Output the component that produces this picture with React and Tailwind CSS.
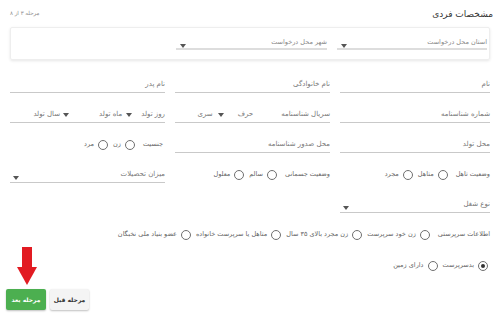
import React from "react";

// فلش کوچک منوی کشویی
const Caret = () => (
  <span className="inline-block w-0 h-0 border-x-[3px] border-x-transparent border-t-[4px] border-t-[#555]" />
);

const Radio = ({ checked = false }) => (
  <span className="w-[10px] h-[10px] rounded-full border border-[#6f6f6f] flex items-center justify-center shrink-0">
    {checked && <span className="w-[4px] h-[4px] rounded-full bg-[#333]" />}
  </span>
);

const Field = ({ label, select = false }) => (
  <div className="h-[30px] flex items-end border-b border-[#c9c9c9]">
    <div className="w-full flex items-center justify-between h-[14px] pb-[1px]">
      <span className="text-[7px] text-[#777]">{label}</span>
      {select && <span className="pl-[3px]"><Caret /></span>}
    </div>
  </div>
);

const RadioGroup = ({ label, options, checkedIndex = -1 }) => (
  <div className="flex items-center gap-[5px] text-[6.5px] text-[#666]">
    {label && <span className="ml-[3px]">{label}</span>}
    {options.map((o, i) => (
      <span key={o} className="flex items-center gap-[4px]">
        <Radio checked={i === checkedIndex} />
        <span>{o}</span>
      </span>
    ))}
  </div>
);

export default function App() {
  return (
    <div
      dir="rtl"
      className="relative w-[500px] h-[315px] bg-white overflow-hidden"
      style={{ fontFamily: '"DejaVu Sans", sans-serif' }}
    >
      {/* سربرگ */}
      <div className="h-[27px] flex items-start justify-between pr-[7px] pl-[10px] pt-[6px]">
        <h2 className="text-[9px] leading-[16px] text-[#333]">مشخصات فردی</h2>
        <span className="text-[5.5px] text-[#888] pt-[3px]">مرحله ۳ از ۸</span>
      </div>

      {/* کارت محل درخواست */}
      <div className="mx-[10px] h-[33px] rounded-[2px] border border-[#eee] shadow-[0_1px_3px_rgba(0,0,0,0.1)] pt-[10px] pr-[2px] grid grid-cols-[150px_151px] gap-x-[10px]">
        <div className="h-[12px] flex items-center justify-between border-b-2 border-[#ddd] pb-[1px]">
          <span className="text-[6.5px] text-[#888]">استان محل درخواست</span>
          <span className="pl-[4px]"><Caret /></span>
        </div>
        <div className="h-[12px] flex items-center justify-between border-b-2 border-[#ddd] pb-[1px]">
          <span className="text-[6.5px] text-[#888]">شهر محل درخواست</span>
          <span className="pl-[4px]"><Caret /></span>
        </div>
      </div>

      {/* فیلدها */}
      <div className="mt-[3px] px-[10px] grid grid-cols-[150px_155px_155px] gap-x-[10px]">
        <Field label="نام" />
        <Field label="نام خانوادگی" />
        <Field label="نام پدر" />

        <Field label="شماره شناسنامه" />
        <div className="h-[30px] flex items-end border-b border-[#c9c9c9]">
          <div className="w-full flex items-center h-[14px] pb-[1px] text-[7px] text-[#777]">
            <span>سریال شناسنامه</span>
            <span className="mr-[28px]">حرف</span>
            <span className="mr-[14px] flex items-center gap-[5px]"><Caret /><span>سری</span></span>
          </div>
        </div>
        <div className="h-[30px] flex items-end border-b border-[#c9c9c9]">
          <div className="w-full flex items-center h-[14px] pb-[1px] text-[7px] text-[#777]">
            <span>روز تولد</span>
            <span className="mr-[9px] flex items-center gap-[4px]"><Caret /><span>ماه تولد</span></span>
            <span className="mr-[30px] flex items-center gap-[3px]"><Caret /><span>سال تولد</span></span>
          </div>
        </div>

        <Field label="محل تولد" />
        <Field label="محل صدور شناسنامه" />
        <div className="h-[30px] flex items-end pb-[1px]">
          <div className="h-[14px] flex items-center pr-[2px]">
            <RadioGroup label="جنسیت" options={["زن", "مرد"]} />
          </div>
        </div>

        <div className="h-[30px] flex items-end pb-[1px]">
          <div className="h-[14px] flex items-center">
            <RadioGroup label="وضعیت تاهل" options={["متاهل", "مجرد"]} />
          </div>
        </div>
        <div className="h-[30px] flex items-end pb-[1px]">
          <div className="h-[14px] flex items-center">
            <RadioGroup label="وضعیت جسمانی" options={["سالم", "معلول"]} />
          </div>
        </div>
        <Field label="میزان تحصیلات" select />

        <Field label="نوع شغل" select />
        <div />
        <div />
      </div>

      {/* اطلاعات سرپرستی */}
      <div className="px-[10px] h-[30px] flex items-end pb-[1px]">
        <div className="h-[14px] flex items-center">
          <RadioGroup
            label="اطلاعات سرپرستی"
            options={["زن خود سرپرست", "زن مجرد بالای ۳۵ سال", "متاهل یا سرپرست خانواده", "عضو بنیاد ملی نخبگان"]}
          />
        </div>
      </div>
      <div className="pr-[12px] h-[31px] flex items-end pb-[1px]">
        <div className="h-[14px] flex items-center">
          <RadioGroup options={["بدسرپرست", "دارای زمین"]} checkedIndex={0} />
        </div>
      </div>

      {/* دکمه‌ها */}
      <div dir="ltr" className="mt-[15px] pl-[6px] flex items-start gap-[4px]">
        <button className="w-[40px] h-[21px] rounded-[2px] bg-[#4caf50] text-white text-[6px] font-bold shadow-[0_1px_2px_rgba(0,0,0,0.25)]">
          مرحله بعد
        </button>
        <button className="w-[39px] h-[21px] rounded-[2px] bg-[#f4f4f4] text-[#333] text-[6px] font-bold shadow-[0_1px_2px_rgba(0,0,0,0.25)]">
          مرحله قبل
        </button>
      </div>

      {/* فلش قرمز راهنما */}
      <svg className="absolute left-[15px] top-[247px]" width="24" height="40" viewBox="0 0 24 40">
        <rect x="7" y="0" width="10" height="21" fill="#e21b22" />
        <polygon points="2,20 22,20 12,38" fill="#e21b22" />
      </svg>
    </div>
  );
}
